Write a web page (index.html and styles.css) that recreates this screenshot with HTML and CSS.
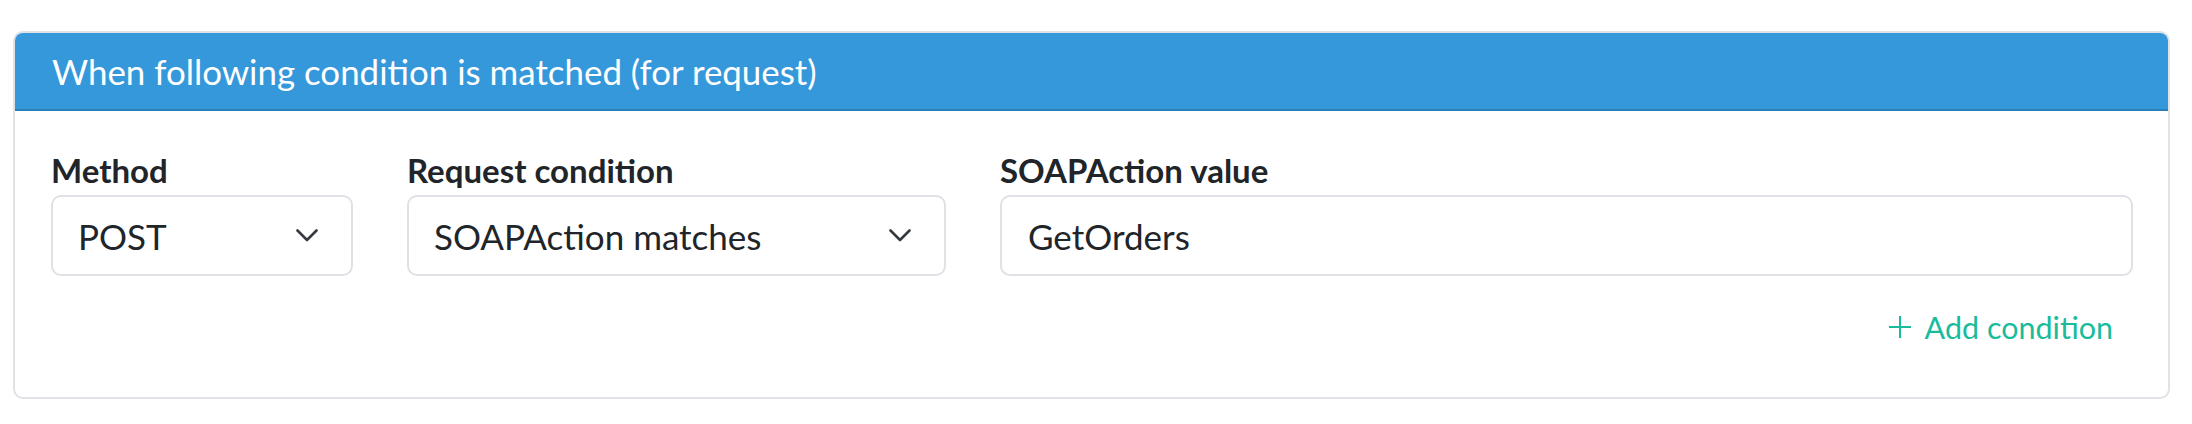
FILE: index.html
```html
<!DOCTYPE html>
<html lang="en">
<head>
<meta charset="utf-8">
<title>Condition</title>
<link rel="stylesheet" href="styles.css">
</head>
<body>
<div class="card">
  <div class="card-header">When following condition is matched (for request)</div>
  <div class="card-body">
    <div class="fields">
      <div class="field">
        <div class="label">Method</div>
        <div class="control select">
          <span>POST</span>
          <svg class="chev" width="22" height="13" viewBox="0 0 22 13"><polyline points="1.5,1.5 11,11 20.5,1.5" fill="none" stroke="#343a40" stroke-width="2.6" stroke-linecap="round" stroke-linejoin="round"/></svg>
        </div>
      </div>
      <div class="field">
        <div class="label">Request condition</div>
        <div class="control select">
          <span>SOAPAction matches</span>
          <svg class="chev" width="22" height="13" viewBox="0 0 22 13"><polyline points="1.5,1.5 11,11 20.5,1.5" fill="none" stroke="#343a40" stroke-width="2.6" stroke-linecap="round" stroke-linejoin="round"/></svg>
        </div>
      </div>
      <div class="field">
        <div class="label">SOAPAction value</div>
        <div class="control input"><span>GetOrders</span></div>
      </div>
    </div>
    <div class="actions">
      <a class="add" href="#">
        <svg class="plus" width="24" height="24" viewBox="0 0 24 24"><path d="M12 1v22M1 12h22" stroke="#18bc9c" stroke-width="2" fill="none"/></svg>
        <span>Add condition</span>
      </a>
    </div>
  </div>
</div>
</body>
</html>
```
FILE: styles.css
```css
html, body {
  margin: 0;
  padding: 0;
  background: #ffffff;
}
body {
  font-family: Lato, "Noto Sans", sans-serif;
  color: #212529;
  padding: 31px 22px 0 13px;
}
.card {
  border: 2px solid #dfe3e8;
  border-radius: 10px;
  overflow: hidden;
  background: #fff;
}
.card-header {
  background: #3498db;
  color: #fff;
  font-size: 34.9px;
  line-height: 38px;
  padding: 20px 37px 18px 37px;
  border-bottom: 2px solid #2c80b9;
}
.card-body {
  padding: 40px 35px 52px 36px;
}
.fields {
  display: grid;
  grid-template-columns: 302px 539px 1fr;
  column-gap: 54px;
}
.label {
  font-weight: 700;
  font-size: 33px;
  line-height: 38px;
  margin-bottom: 6px;
}
.control {
  box-sizing: border-box;
  height: 81px;
  border: 2px solid #dee2e6;
  border-radius: 10px;
  display: flex;
  align-items: center;
  padding: 0 33px 0 25px;
  font-size: 35px;
  color: #212529;
}
.input {
  padding-left: 26px;
}
.select {
  justify-content: space-between;
}
.chev {
  display: block;
}
.actions {
  display: flex;
  justify-content: flex-end;
  margin-top: 33px;
  padding-right: 20px;
}
.add {
  display: flex;
  align-items: center;
  gap: 13px;
  color: #18bc9c;
  text-decoration: none;
  font-size: 30.5px;
  line-height: 36px;
}
.plus {
  display: block;
}
```
